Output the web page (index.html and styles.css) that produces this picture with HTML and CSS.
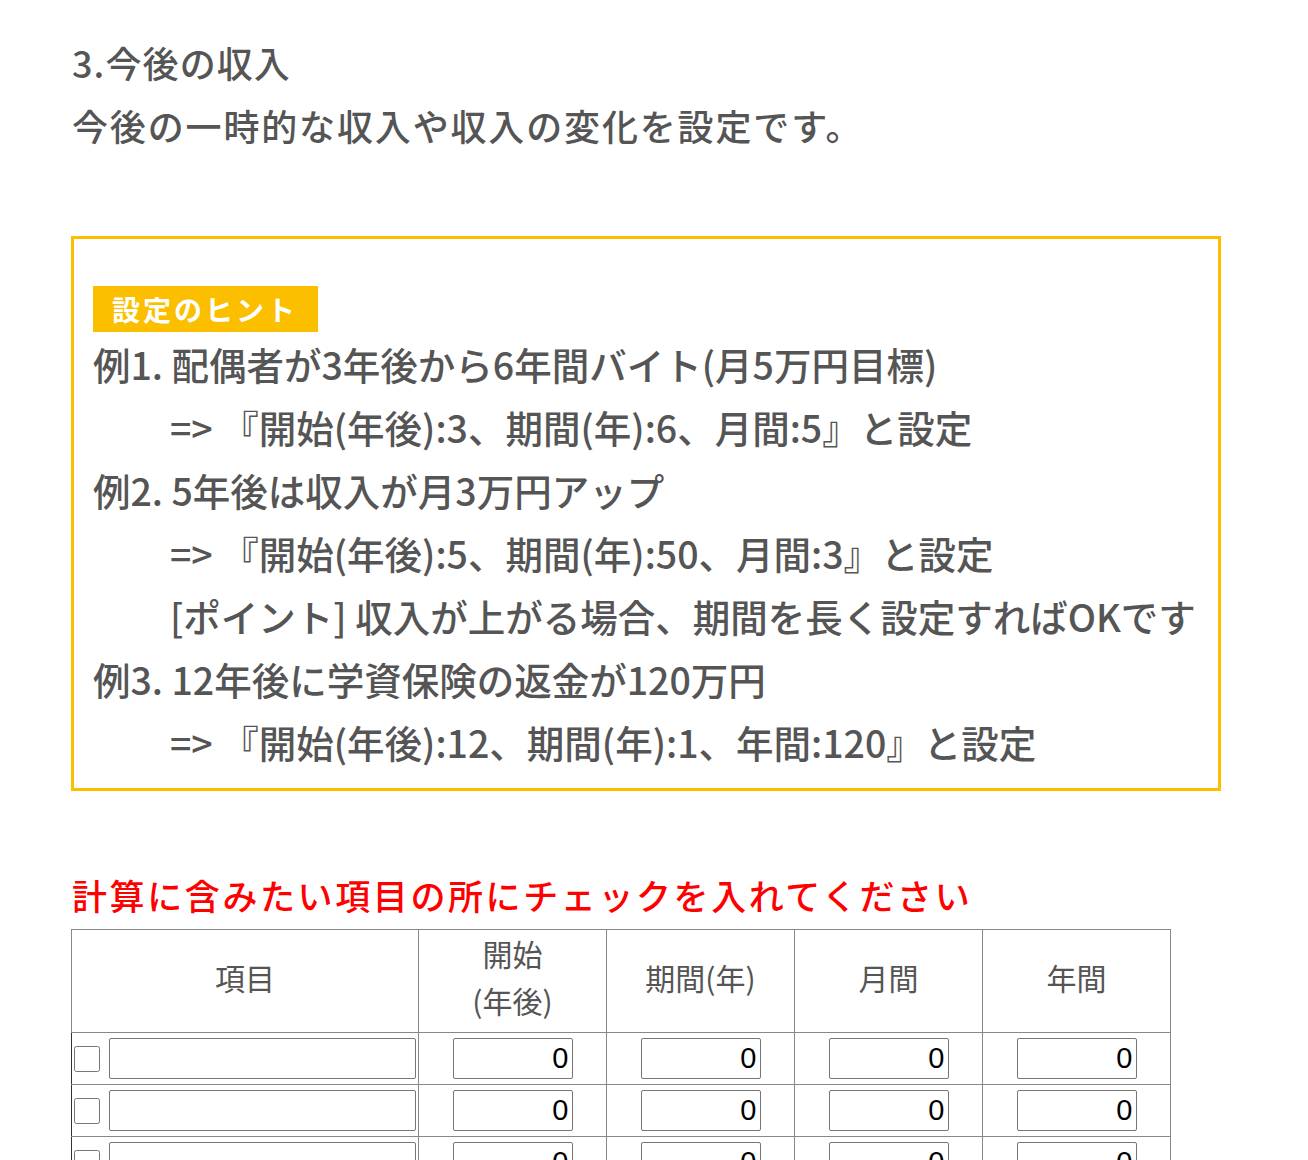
FILE: index.html
```html
<!DOCTYPE html>
<html lang="ja">
<head>
    <meta charset="UTF-8">
    <meta name="viewport" content="width=device-width, initial-scale=1.0">
    <title>今後の収入</title>
    <link rel="stylesheet" href="styles.css">
</head>
<body>
    <div class="container">
        <h2 class="section-title">3.今後の収入</h2>
        <p class="lead">今後の一時的な収入や収入の変化を設定です。</p>

        <div class="hint-box">
            <span class="hint-label">設定のヒント</span>
            <p class="hint-line">例1. 配偶者が3年後から6年間バイト(月5万円目標)</p>
            <p class="hint-line indent">=> 『開始(年後):3、期間(年):6、月間:5』と設定</p>
            <p class="hint-line">例2. 5年後は収入が月3万円アップ</p>
            <p class="hint-line indent">=> 『開始(年後):5、期間(年):50、月間:3』と設定</p>
            <p class="hint-line indent">[ポイント] 収入が上がる場合、期間を長く設定すればOKです</p>
            <p class="hint-line">例3. 12年後に学資保険の返金が120万円</p>
            <p class="hint-line indent">=> 『開始(年後):12、期間(年):1、年間:120』と設定</p>
        </div>

        <p class="notice">計算に含みたい項目の所にチェックを入れてください</p>

        <table class="income-table">
            <thead>
                <tr>
                    <th class="col-name">項目</th>
                    <th>開始<br>(年後)</th>
                    <th>期間(年)</th>
                    <th>月間</th>
                    <th>年間</th>
                </tr>
            </thead>
            <tbody id="incomeRows"></tbody>
        </table>
    </div>

    <script>
        const rowCount = 3;
        const tbody = document.getElementById('incomeRows');
        tbody.innerHTML = Array.from({ length: rowCount }, () => `
            <tr>
                <td class="col-name">
                    <div class="name-cell">
                        <input type="checkbox" class="use-check">
                        <input type="text" class="name-input">
                    </div>
                </td>
                <td><input type="text" class="num-input" value="0"></td>
                <td><input type="text" class="num-input" value="0"></td>
                <td><input type="text" class="num-input" value="0"></td>
                <td><input type="text" class="num-input" value="0"></td>
            </tr>
        `).join('');
    </script>
</body>
</html>
```

FILE: styles.css
```css
:root {
    --text-color: #555555;
    --accent-color: #fbbf00;
    --alert-color: #ff0000;
    --line-color: #888888;
}
body {
    margin: 0;
    font-family: "Noto Sans CJK JP", "Noto Sans", sans-serif;
    color: var(--text-color);
    background-color: white;
}
.container {
    padding: 31px 0 0 71px;
    width: 1150px;
}
.section-title {
    margin: 0;
    font-size: 36px;
    font-weight: 500;
    line-height: 63px;
    letter-spacing: 1.1px;
    padding-left: 1px;
}
.lead {
    margin: 0;
    font-size: 36px;
    font-weight: 500;
    line-height: 63px;
    letter-spacing: 1.85px;
    padding-left: 1px;
}
.hint-box {
    margin-top: 79px;
    border: 3px solid var(--accent-color);
    padding: 47px 19px 15px 19px;
}
.hint-label {
    display: inline-block;
    background-color: var(--accent-color);
    color: white;
    font-size: 28px;
    font-weight: 700;
    line-height: 46px;
    letter-spacing: 3px;
    padding: 0 20px 0 19px;
}
.hint-line {
    margin: 0;
    font-size: 37.5px;
    font-weight: 500;
    line-height: 63px;
    white-space: nowrap;
}
.indent {
    padding-left: 77px;
}
.notice {
    margin: 74px 0 0 0;
    color: var(--alert-color);
    font-size: 35px;
    font-weight: 500;
    line-height: 60px;
    letter-spacing: 2.6px;
    padding-left: 1px;
}
.income-table {
    table-layout: fixed;
    width: 1099px;
    border-collapse: collapse;
    border: 1px solid #333333;
    margin-top: 4px;
}
.income-table th {
    width: 187px;
    height: 94px;
    padding: 0 0 8px 0;
    border: 1px solid var(--line-color);
    font-size: 30px;
    font-weight: 400;
    line-height: 47px;
    color: var(--text-color);
}
.income-table th.col-name {
    width: 346px;
}
.income-table td {
    height: 51px;
    padding: 0;
    border: 1px solid var(--line-color);
    text-align: center;
}
.income-table td.col-name {
    border-left-color: #333333;
}
.name-cell {
    display: flex;
    align-items: center;
    gap: 9px;
    padding: 0 2px 0 2px;
}
.use-check {
    width: 26px;
    height: 26px;
    margin: 0;
}
.name-input,
.num-input {
    height: 41px;
    box-sizing: border-box;
    border: 1px solid #767676;
    border-radius: 2px;
    font-family: "Liberation Sans", Arial, sans-serif;
    font-size: 29px;
    color: black;
    padding: 0 3px;
}
.name-input {
    flex: 1;
    min-width: 0;
}
.num-input {
    width: 120px;
    text-align: right;
}
```
